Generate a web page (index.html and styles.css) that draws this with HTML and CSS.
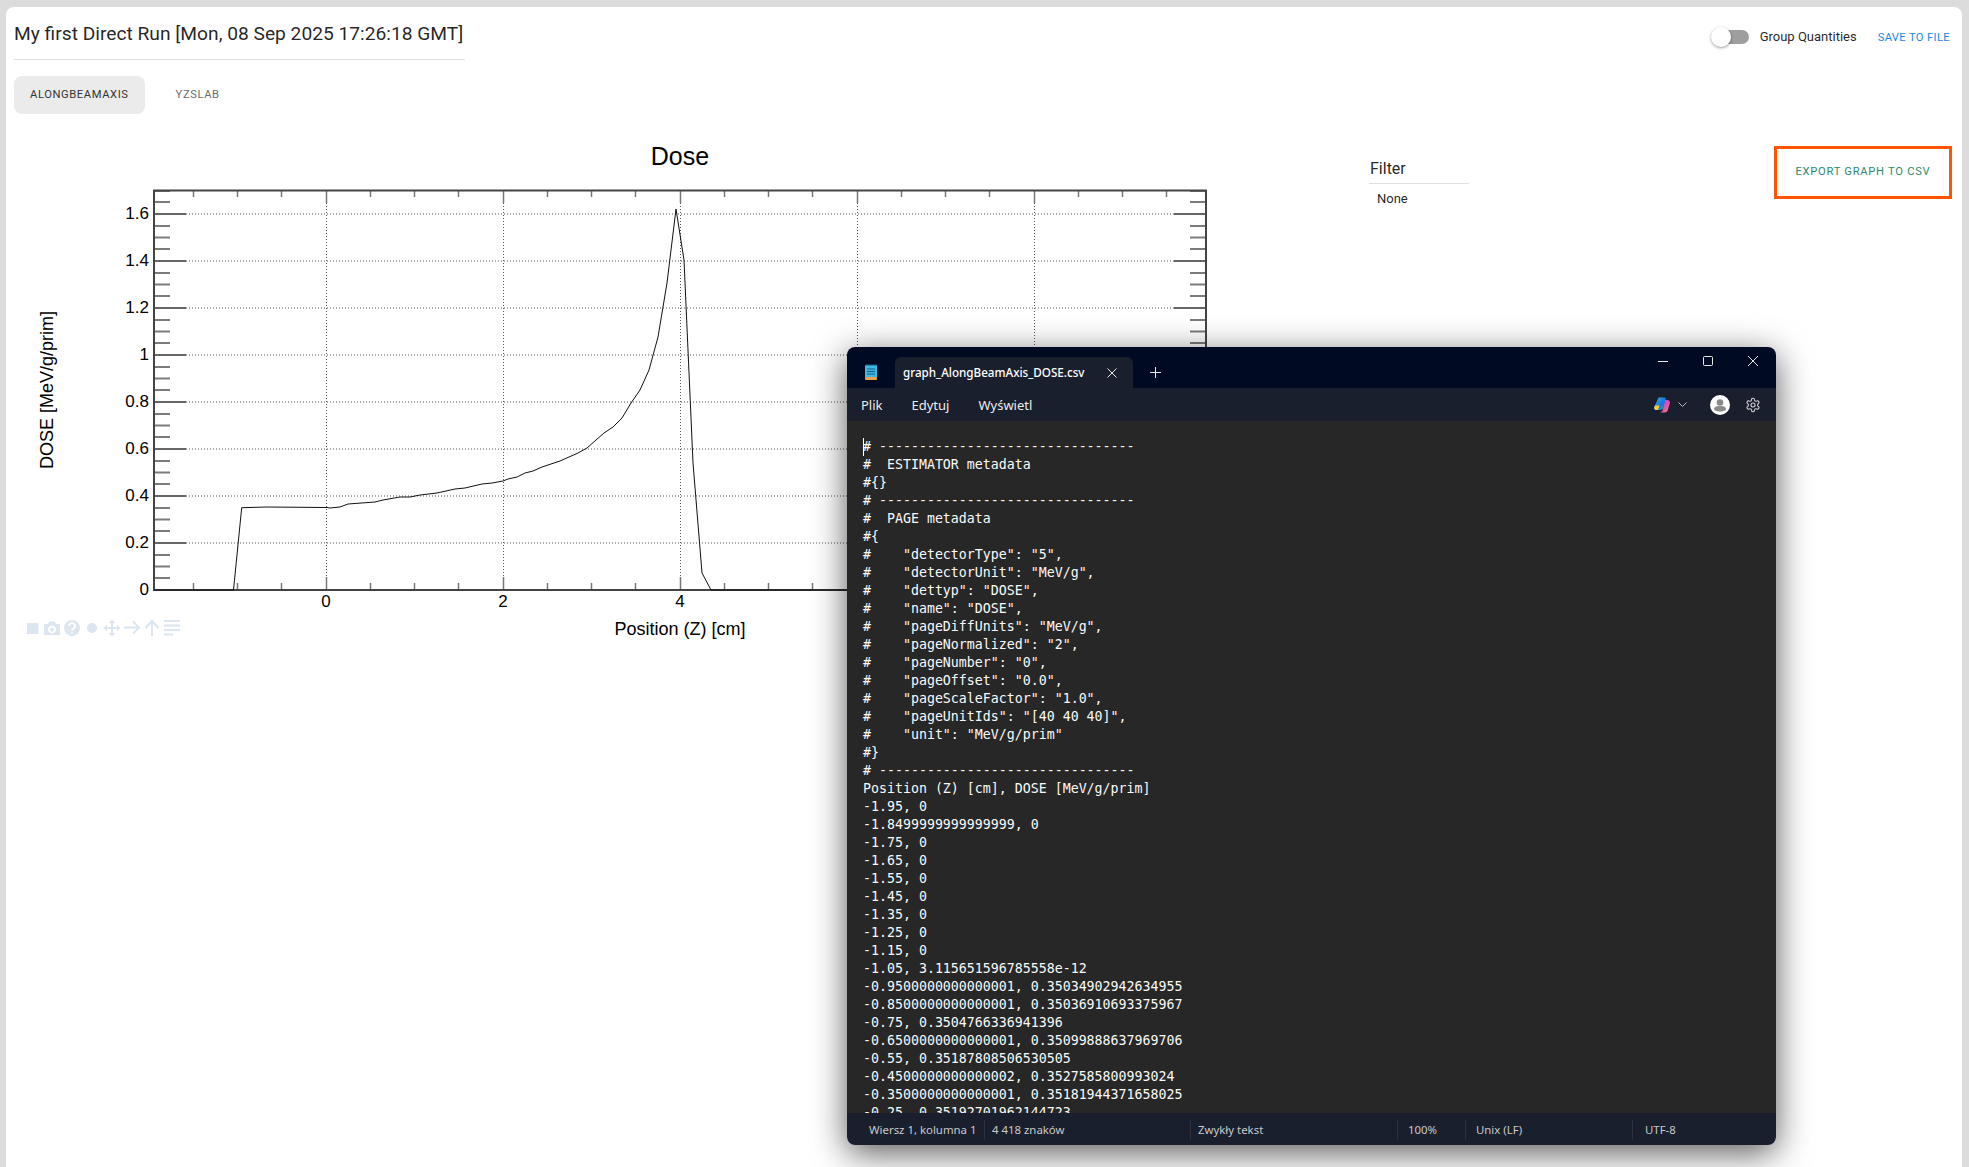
FILE: index.html
```
<!DOCTYPE html>
<html lang="en">
<head>
<meta charset="utf-8">
<title>My first Direct Run</title>
<link rel="stylesheet" href="styles.css">
</head>
<body>
<main class="card">
  <header class="top">
    <h1 class="run-title">My first Direct Run [Mon, 08 Sep 2025 17:26:18 GMT]</h1>
    <div class="controls">
      <span class="switch"><span class="switch-thumb"></span></span>
      <span class="switch-label">Group Quantities</span>
      <span class="save">SAVE TO FILE</span>
    </div>
  </header>
  <nav class="tabs">
    <span class="tab tab-active">ALONGBEAMAXIS</span>
    <span class="tab">YZSLAB</span>
  </nav>
  <section class="content">
    <svg class="chart" width="1294" height="510" viewBox="6 130 1294 510" xmlns="http://www.w3.org/2000/svg">
      <defs>
        <g id="yticks">
          <path class="tick-minor" d="M154 578h16M154 566.500h16M154 555h16M154 531h16M154 519.500h16M154 508h16M154 484h16M154 472.500h16M154 461h16M154 437h16M154 425.500h16M154 414h16M154 390h16M154 378.500h16M154 367h16M154 343h16M154 331.500h16M154 320h16M154 296h16M154 284.500h16M154 273h16M154 249h16M154 237.500h16M154 226h16M154 202h16M154 191h16"/>
          <path class="tick-major" d="M154 543h32M154 496h32M154 449h32M154 402h32M154 355h32M154 308h32M154 261h32M154 214h32"/>
        </g>
        <g id="xticks">
          <path class="tick-x" d="M193.500 190v7M237.500 190v7M281.500 190v7M370.500 190v7M414.500 190v7M458.500 190v7M547.500 190v7M591.500 190v7M635.500 190v7M724.500 190v7M768.500 190v7M812.500 190v7M901.500 190v7M945.500 190v7M989.500 190v7M1078.500 190v7M1122.500 190v7M1166.500 190v7"/>
          <path class="tick-x" d="M326.500 190v13M503.500 190v13M680.500 190v13M857.500 190v13M1034.500 190v13"/>
        </g>
      </defs>
      <path class="grid" d="M186 214H1174M186 261H1174M186 308H1174M186 355H1174M186 402H1174M186 449H1174M186 496H1174M186 543H1174"/>
      <path class="grid" d="M326.500 203V577M503.500 203V577M680.500 203V577M857.500 203V577M1034.500 203V577"/>
      <use href="#yticks"/>
      <use href="#yticks" transform="translate(1360 0) scale(-1 1)"/>
      <use href="#xticks"/>
      <use href="#xticks" transform="translate(0 780) scale(1 -1)"/>
      <rect class="frame" x="154" y="190.500" width="1052" height="399.500"/>
      <path class="curve" d="M154 590H233.500L241.700 507.700L267 507L327 507.500L330 508L340 507L348 504L375 502L383 500L400 497L410 497L420 495L437 493L455 489L465 488L482 484L492 483L503 481L508 479L517 477L525 473L533 471L542 467L560 461L578 453L587 448L596 440L604 433L613 427L622 418L631 403L640 390L649 370L658 337L667 283L676 209L684 260L693 463L702 573L711 590H1206"/>
      <text class="plot-title" x="680" y="165">Dose</text>
      <text class="ylab" x="149" y="219">1.6</text>
      <text class="ylab" x="149" y="266">1.4</text>
      <text class="ylab" x="149" y="313">1.2</text>
      <text class="ylab" x="149" y="360">1</text>
      <text class="ylab" x="149" y="407">0.8</text>
      <text class="ylab" x="149" y="454">0.6</text>
      <text class="ylab" x="149" y="501">0.4</text>
      <text class="ylab" x="149" y="548">0.2</text>
      <text class="ylab" x="149" y="595">0</text>
      <text class="xlab" x="326" y="607">0</text>
      <text class="xlab" x="503" y="607">2</text>
      <text class="xlab" x="680" y="607">4</text>
      <text class="xlab" x="857" y="607">6</text>
      <text class="axis-title" x="680" y="635">Position (Z) [cm]</text>
      <text class="axis-title" transform="translate(53 390) rotate(-90)">DOSE [MeV/g/prim]</text>
      <g class="modebar">
        <rect x="27" y="623" width="11.500" height="11"/>
        <path fill-rule="evenodd" d="M44 624h4l1.500-2.500h5l1.500 2.500h4v11h-16zM52 625.500a4 4 0 1 0 .01 0zM52 627.500a2 2 0 1 1-.01 0z"/>
        <circle cx="72" cy="628" r="8"/>
        <path class="mode-q" d="M69 626a3 3 0 1 1 4.500 2.600c-1 .6-1.500 1-1.500 2"/>
        <circle class="mode-q-dot" cx="72" cy="633" r="1"/>
        <circle cx="92" cy="628" r="5"/>
        <path class="mode-line" d="M112 622v12M106 628h12"/>
        <path d="M112 619.500l3.500 3.500h-7zM112 636.500l3.500-3.500h-7zM103.500 628l3.500-3.500v7zM120.500 628l-3.500-3.500v7z"/>
        <path class="mode-line" d="M124 627.500h15M133 621.500l6 6-6 6"/>
        <path class="mode-line" d="M152 636v-15M145.500 628l6.500-7 6.500 7"/>
        <path class="mode-line" d="M164 621h16M164 625.500h16M164 630h16M164 634.500h9"/>
      </g>
    </svg>
    <aside class="filter">
      <h2 class="filter-title">Filter</h2>
      <p class="filter-value">None</p>
    </aside>
    <div class="export">EXPORT GRAPH TO CSV</div>
  </section>
</main>

<div class="notepad">
  <div class="np-titlebar">
    <svg class="np-icon" width="12" height="16" viewBox="0 0 12 16" xmlns="http://www.w3.org/2000/svg">
      <rect x="0" y="1" width="12" height="13" rx="1" fill="#3fb6e4"/>
      <rect x="0" y="13" width="12" height="3" rx="1" fill="#e8a04c"/>
      <path d="M2 5h8M2 7.500h8M2 10h8" stroke="#12607f" stroke-width="1"/>
      <path d="M2 0v2M4 0v2M6 0v2M8 0v2M10 0v2" stroke="#12607f" stroke-width="1"/>
    </svg>
    <div class="np-tab">
      <span class="np-tab-name">graph_AlongBeamAxis_DOSE.csv</span>
      <svg width="10" height="10" viewBox="0 0 10 10" xmlns="http://www.w3.org/2000/svg"><path class="np-glyph" d="M.5.500l9 9M9.500.500l-9 9"/></svg>
    </div>
    <svg class="np-plus" width="11" height="11" viewBox="0 0 11 11" xmlns="http://www.w3.org/2000/svg"><path class="np-glyph" d="M5.500 0v11M0 5.500h11"/></svg>
    <div class="np-winbtns">
      <svg width="10" height="10" viewBox="0 0 10 10" xmlns="http://www.w3.org/2000/svg"><path class="np-glyph" d="M0 5.500h10"/></svg>
      <svg width="10" height="10" viewBox="0 0 10 10" xmlns="http://www.w3.org/2000/svg"><rect class="np-glyph" x=".5" y=".5" width="9" height="9" rx="1"/></svg>
      <svg width="10" height="10" viewBox="0 0 10 10" xmlns="http://www.w3.org/2000/svg"><path class="np-glyph" d="M0 0l10 10M10 0L0 10"/></svg>
    </div>
  </div>
  <div class="np-menubar">
    <span class="np-menu">Plik</span>
    <span class="np-menu">Edytuj</span>
    <span class="np-menu">Wyświetl</span>
    <div class="np-tools">
      <svg class="np-copilot" width="16" height="16" viewBox="0 0 16 16" xmlns="http://www.w3.org/2000/svg">
        <defs>
          <linearGradient id="cpa" x1="0" y1="0" x2="1" y2="1"><stop offset="0" stop-color="#2fb3e6"/><stop offset=".6" stop-color="#1e6fe0"/><stop offset="1" stop-color="#2fc58a"/></linearGradient>
          <linearGradient id="cpb" x1="0" y1="0" x2="1" y2="1"><stop offset="0" stop-color="#8a4be0"/><stop offset=".6" stop-color="#e455b0"/><stop offset="1" stop-color="#f9913f"/></linearGradient>
        </defs>
        <path d="M4.500 .5H10c1.500 0 2 1 1.600 2.200L9 11c-.5 1.300-1.500 2-2.800 2H2.500C.8 13-.3 11.700.3 10z" fill="url(#cpa)"/>
        <path d="M1 8.500h4.500L4 13H2.500C.8 13-.3 11.700.3 10z" fill="#f3cf3a"/>
        <path d="M11 3h2.300c1.800 0 3 1.500 2.500 3.200l-1.900 6.600c-.5 1.700-1.700 2.700-3.200 2.700H5.500C7 15.500 8.200 14.500 8.700 13z" fill="url(#cpb)"/>
      </svg>
      <svg class="np-chev" width="9" height="5" viewBox="0 0 9 5" xmlns="http://www.w3.org/2000/svg"><path d="M.5.500l4 4 4-4" fill="none" stroke="#b8bcc6"/></svg>
      <svg class="np-avatar" width="20" height="20" viewBox="0 0 20 20" xmlns="http://www.w3.org/2000/svg">
        <circle cx="10" cy="10" r="10" fill="#fff"/>
        <circle cx="10" cy="7.500" r="3.300" fill="#8a8a8a"/>
        <path d="M4 14c0-2 2-3 6-3s6 1 6 3c0 1.500-2.500 2.500-6 2.500S4 15.500 4 14z" fill="#8a8a8a"/>
      </svg>
      <svg class="np-gear" width="16" height="16" viewBox="0 0 24 24" xmlns="http://www.w3.org/2000/svg">
        <path class="np-gear-line" d="M12.220 2h-.44a2 2 0 0 0-2 2v.18a2 2 0 0 1-1 1.730l-.43.250a2 2 0 0 1-2 0l-.15-.08a2 2 0 0 0-2.730.730l-.22.380a2 2 0 0 0 .730 2.730l.15.100a2 2 0 0 1 1 1.720v.510a2 2 0 0 1-1 1.740l-.15.090a2 2 0 0 0-.73 2.730l.22.380a2 2 0 0 0 2.730.730l.15-.08a2 2 0 0 1 2 0l.43.250a2 2 0 0 1 1 1.730V20a2 2 0 0 0 2 2h.44a2 2 0 0 0 2-2v-.18a2 2 0 0 1 1-1.730l.43-.25a2 2 0 0 1 2 0l.15.080a2 2 0 0 0 2.730-.73l.22-.39a2 2 0 0 0-.73-2.730l-.15-.08a2 2 0 0 1-1-1.740v-.5a2 2 0 0 1 1-1.740l.15-.09a2 2 0 0 0 .73-2.730l-.22-.38a2 2 0 0 0-2.730-.73l-.15.080a2 2 0 0 1-2 0l-.43-.25a2 2 0 0 1-1-1.730V4a2 2 0 0 0-2-2z"/>
        <circle class="np-gear-line" cx="12" cy="12" r="3"/>
      </svg>
    </div>
  </div>
  <div class="np-editor"><span class="np-caret"></span><pre class="np-text"># --------------------------------
#  ESTIMATOR metadata
#{}
# --------------------------------
#  PAGE metadata
#{
#    "detectorType": "5",
#    "detectorUnit": "MeV/g",
#    "dettyp": "DOSE",
#    "name": "DOSE",
#    "pageDiffUnits": "MeV/g",
#    "pageNormalized": "2",
#    "pageNumber": "0",
#    "pageOffset": "0.0",
#    "pageScaleFactor": "1.0",
#    "pageUnitIds": "[40 40 40]",
#    "unit": "MeV/g/prim"
#}
# --------------------------------
Position (Z) [cm], DOSE [MeV/g/prim]
-1.95, 0
-1.8499999999999999, 0
-1.75, 0
-1.65, 0
-1.55, 0
-1.45, 0
-1.35, 0
-1.25, 0
-1.15, 0
-1.05, 3.115651596785558e-12
-0.9500000000000001, 0.35034902942634955
-0.8500000000000001, 0.35036910693375967
-0.75, 0.3504766336941396
-0.6500000000000001, 0.35099888637969706
-0.55, 0.35187808506530505
-0.4500000000000002, 0.3527585800993024
-0.3500000000000001, 0.35181944371658025
-0.25, 0.35192701962144723</pre></div>
  <div class="np-status">
    <span class="st st-pos">Wiersz 1, kolumna 1</span>
    <span class="st st-chars">4 418 znaków</span>
    <span class="st st-type">Zwykły tekst</span>
    <span class="st st-zoom">100%</span>
    <span class="st st-eol">Unix (LF)</span>
    <span class="st st-enc">UTF-8</span>
  </div>
</div>
</body>
</html>
```

FILE: styles.css
```
* { box-sizing: border-box; }
html, body { height: 100%; }
body {
  margin: 0;
  padding: 7px 7px 0 6px;
  background: #dcdcdc;
  font-family: Roboto, "Liberation Sans", sans-serif;
  color: rgba(0, 0, 0, .87);
  overflow: hidden;
}
.card {
  background: #fff;
  border-radius: 8px 8px 0 0;
  height: 100%;
  padding: 0 10px 0 8px;
}
.top { display: flex; justify-content: space-between; align-items: flex-start; }
.run-title {
  margin: 0;
  width: 451px;
  height: 53px;
  padding-top: 11px;
  border-bottom: 1px solid #e0e0e0;
  font-size: 19.200px;
  line-height: 32px;
  font-weight: 400;
  white-space: nowrap;
}
.controls { display: flex; align-items: center; height: 24px; margin-top: 18px; margin-right: 2px; }
.switch { position: relative; display: block; width: 33px; height: 14px; margin-left: 5px; border-radius: 7px; background: #9e9e9e; }
.switch-thumb {
  position: absolute; left: -5px; top: -3px; width: 20px; height: 20px; border-radius: 50%;
  background: #fff; box-shadow: 0 1px 3px rgba(0, 0, 0, .4);
}
.switch-label { margin-left: 11px; font-size: 13px; line-height: 20px; }
.save { margin-left: 21px; font-size: 11.200px; font-weight: 400; letter-spacing: .35px; color: #1e88e5; }
.tabs { display: flex; margin-top: 16px; height: 38px; }
.tab {
  display: flex; align-items: center; padding: 0 16px 2px;
  border-radius: 8px; font-size: 11.200px; font-weight: 400; letter-spacing: .6px; color: #6b6b6b;
}
.tab-active { background: #ebebeb; color: #333; margin-right: 15px; }
.content { display: flex; align-items: flex-start; margin: 16px -10px 0 -8px; padding-right: 10px; }
.chart { display: block; flex: none; }
.filter { margin: 27px 0 0 69px; width: 100px; }
.filter-title {
  margin: 0; padding: 0 1px 2px; border-bottom: 1px solid #e0e0e0;
  font-size: 16px; line-height: 24px; font-weight: 400;
}
.filter-value { margin: 6px 0 0 8px; font-size: 13px; line-height: 18px; }
.export {
  display: flex; align-items: center; justify-content: center;
  margin: 16px 0 0 auto; width: 178px; height: 53px; padding-bottom: 2px;
  border: 3px solid #ff5500; font-size: 11.200px; font-weight: 400; letter-spacing: .72px; color: #2e8b6c;
}
.grid { fill: none; stroke: #555; stroke-width: 1; stroke-dasharray: 1 2; }
.tick-minor { fill: none; stroke: #7c7c7c; stroke-width: 2; }
.tick-major { fill: none; stroke: #666; stroke-width: 2; }
.tick-x { fill: none; stroke: #777; stroke-width: 1.500; }
.frame { fill: none; stroke: #444; stroke-width: 2; }
.curve { fill: none; stroke: #111; stroke-width: 1; }
.chart text { font-family: "Liberation Sans", Arial, sans-serif; fill: #000; }
.plot-title { font-size: 25px; text-anchor: middle; }
.ylab { font-size: 17px; text-anchor: end; }
.xlab { font-size: 17px; text-anchor: middle; }
.axis-title { font-size: 18px; text-anchor: middle; }
.modebar { fill: #dbe6f1; }
.mode-line { fill: none; stroke: #dbe6f1; stroke-width: 2; }
.mode-q { fill: none; stroke: #fff; stroke-width: 2; }
.mode-q-dot { fill: #fff; }

.notepad {
  position: absolute; left: 847px; top: 347px; width: 929px; height: 798px;
  display: flex; flex-direction: column;
  border-radius: 8px;
  font-family: "Noto Sans", "Open Sans", sans-serif;
  color: #fff;
  box-shadow: 0 8px 34px rgba(0, 0, 0, .65);
}
.np-titlebar {
  display: flex; align-items: flex-end; height: 41px; flex: none;
  background: #000a23; border-radius: 8px 8px 0 0; position: relative;
}
.np-icon { position: absolute; left: 18px; top: 17px; }
.np-tab {
  display: flex; align-items: center; justify-content: space-between;
  margin-left: 48px; width: 238px; height: 31px; padding: 0 16px 0 8px;
  background: #1a1f2e; border-radius: 6px 6px 0 0;
}
.np-tab-name { font-size: 11.650px; font-weight: 500; white-space: nowrap; }
.np-glyph { fill: none; stroke: #e8e8e8; stroke-width: 1; }
.np-plus { margin: 0 0 10px 17px; }
.np-winbtns {
  display: flex; gap: 35px; margin-left: auto; padding: 0 18px 22px 0;
}
.np-menubar {
  display: flex; align-items: center; height: 33px; flex: none; padding-left: 14px;
  background: #1a1f2e; font-size: 13px;
}
.np-menu { margin-right: 29px; color: #ececec; white-space: nowrap; }
.np-tools { display: flex; align-items: center; margin-left: auto; padding-right: 15px; }
.np-chev { margin-left: 8px; }
.np-avatar { margin-left: 23px; }
.np-gear { margin-left: 15px; }
.np-gear-line { fill: none; stroke: #d4d4d8; stroke-width: 1.600; }
.np-editor {
  position: relative; flex: 1; min-height: 0; overflow: hidden;
  padding: 17px 0 0 16px; background: #272727;
}
.np-caret { position: absolute; left: 16px; top: 17px; width: 1px; height: 18px; background: #fff; }
.np-text {
  margin: 0; font-family: "DejaVu Sans Mono", "Liberation Mono", monospace;
  font-size: 13.280px; line-height: 18px; color: #fafafa;
}
.np-status {
  display: flex; align-items: center; height: 32px; flex: none; padding-top: 1px;
  background: #1a1f2e; border-radius: 0 0 8px 8px; font-size: 11.400px; color: #c9c9c9;
}
.st { display: block; height: 20px; line-height: 20px; white-space: nowrap; border-left: 1px solid #2d3242; }
.st-pos { width: 137px; padding-left: 22px; border-left: 0; }
.st-chars { width: 206px; padding-left: 7px; }
.st-type { width: 207px; padding-left: 7px; }
.st-zoom { width: 68px; padding-left: 10px; }
.st-eol { width: 167px; padding-left: 10px; }
.st-enc { padding-left: 12px; }
```
